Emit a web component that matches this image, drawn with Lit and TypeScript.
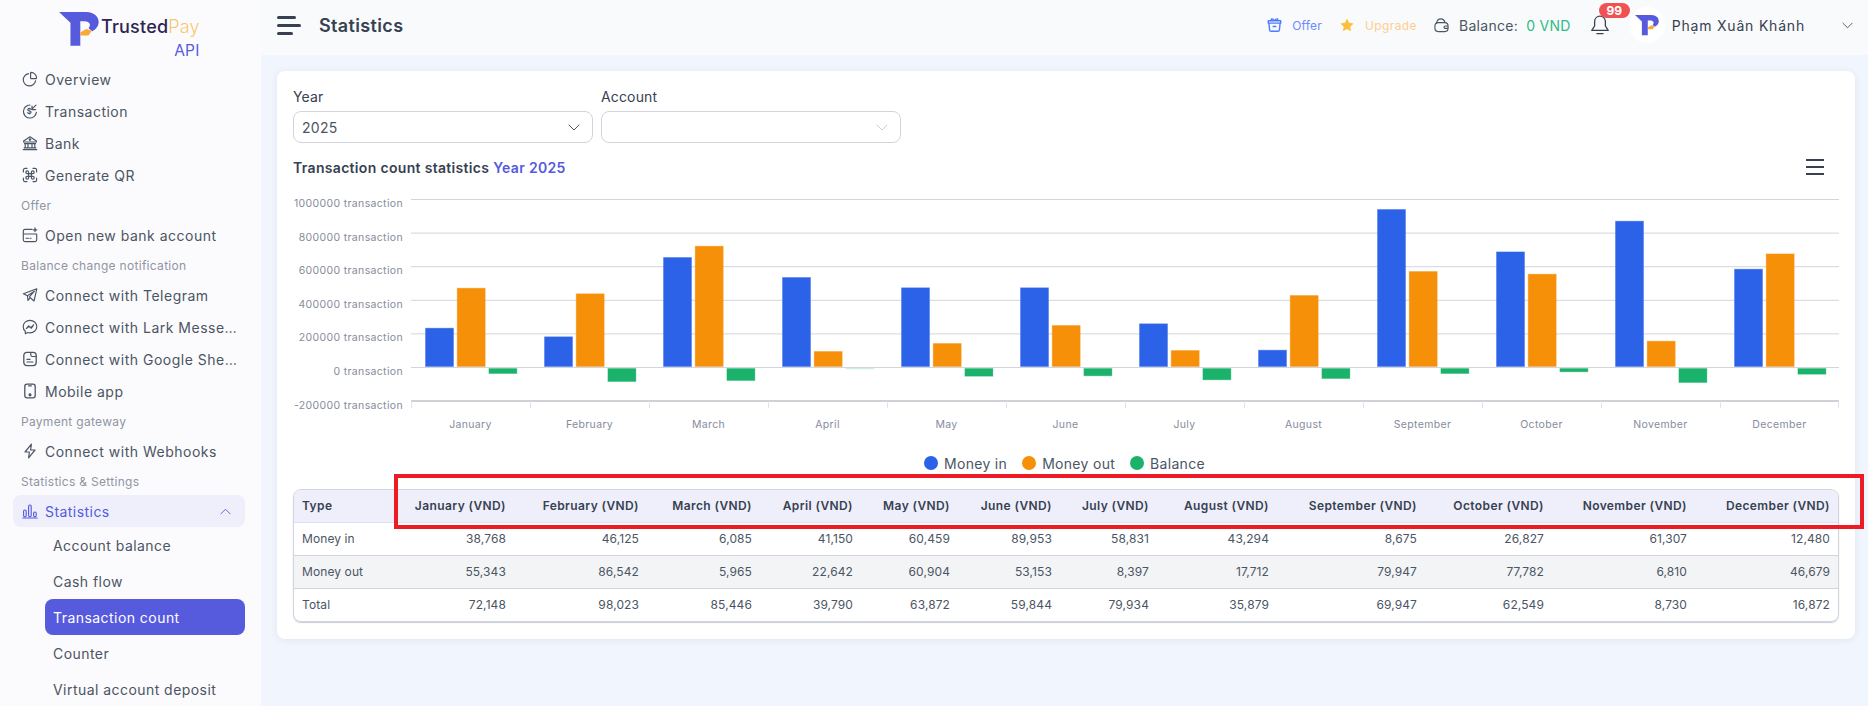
import { LitElement, html, css, svg } from "lit";
import { customElement } from "lit/decorators.js";

const s = (body: unknown, cls = "ic") => html`<svg class=${cls} viewBox="0 0 16 16" fill="none" stroke="currentColor" stroke-width="1.15" stroke-linecap="round" stroke-linejoin="round">${body}</svg>`;

const icons: Record<string, unknown> = {
  overview: s(svg`<path d="M6.6 2.6a6.2 6.2 0 1 0 7 7.1"/><path d="M9 1.4a5.6 5.6 0 0 1 5.6 5.6c0 .4-.2.6-.6.6H9.2c-.4 0-.6-.2-.6-.6V1.8c0-.2.2-.4.4-.4Z"/>`),
  tx: s(svg`<path d="M8 2a6.5 6.5 0 1 0 6.4 7.4"/><path d="M9.6 6.4 14 2.2M10 3v3.6h3.6"/><text x="4.7" y="10.7" font-size="7.5" font-weight="700" fill="currentColor" stroke="none" font-family="Inter">$</text>`),
  bank: s(svg`<path d="M1.6 6 8 1.8 14.4 6v1H1.6ZM2.4 8.6h11.2M3.2 9v3.4M6 9v3.4M10 9v3.4M12.8 9v3.4M2.2 12.8h11.6M1.2 14.6h13.6"/><circle cx="8" cy="4.6" r=".7" fill="currentColor"/>`),
  qr: s(svg`<path d="M1.4 5V3a1.6 1.6 0 0 1 1.6-1.6h2M11 1.4h2A1.6 1.6 0 0 1 14.6 3v2M14.6 11v2a1.6 1.6 0 0 1-1.6 1.6h-2M5 14.6H3A1.6 1.6 0 0 1 1.4 13v-2"/><path d="M6.6 6.6h2.8v2.8H6.6ZM6.6 6.6H5.2a1.4 1.4 0 1 1 1.4-1.4ZM9.4 6.6V5.2a1.4 1.4 0 1 1 1.4 1.4ZM9.4 9.4h1.4a1.4 1.4 0 1 1-1.4 1.4ZM6.6 9.4v1.4a1.4 1.4 0 1 1-1.4-1.4Z"/>`),
  card: s(svg`<path d="M10 2.400H3A1.700 1.700 0 0 0 1.300 4v9A1.700 1.700 0 0 0 3 14.600h10a1.700 1.700 0 0 0 1.700-1.600V7.400M1.300 7h13.400M4 11.200h2.400M8 11.200h1"/><path d="M13 1v3.600M11.200 2.800h3.600" stroke-width="1.300"/>`),
  tg: s(svg`<path d="M14.800 1.800 1.400 6.800l4 2 7-4.600-5 5.600 4.600 4.200ZM5.400 8.800l.6 4.600 2-2.200"/>`),
  lark: s(svg`<path d="M8 1.300c-3.900 0-6.800 2.800-6.800 6.400 0 1.900.8 3.500 2.100 4.600v2.400l2.300-1.200c.7.2 1.500.3 2.400.3 3.900 0 6.800-2.800 6.800-6.100S11.900 1.300 8 1.300Z"/><path d="m4.300 9.600 2.300-2.800 2.200 1.800 2.800-2.700-2.200 3.300-2.400-1.600Z"/>`),
  sheet: s(svg`<rect x="1.800" y="1.400" width="12.400" height="13.200" rx="3" stroke-width="1.300"/><path d="M8.800 1.600v2.400a1.500 1.500 0 0 0 1.500 1.500H14M5 8.400h3M5 11h6" stroke-width="1.200"/>`),
  phone: s(svg`<rect x="2.800" y="1.200" width="10.400" height="13.600" rx="2.200" stroke-width="1.300"/><path d="M6.600 2.800h2.800"/><circle cx="8" cy="11.800" r="1" fill="currentColor"/>`),
  bolt: s(svg`<path d="M9.400 1.200 3 9h4.400l-.8 5.800L13 7H8.600Z" stroke-width="1.200"/>`),
  stats: s(svg`<path d="M.8 15h14.400"/><rect x="1.600" y="7" width="2.600" height="6.800" rx="1.200"/><rect x="6.600" y="2" width="2.600" height="11.800" rx="1.200"/><rect x="11.600" y="9" width="2.600" height="4.800" rx="1.200"/>`),
};

const chevron = (cls: string) => html`<svg class=${cls} viewBox="0 0 12 7" fill="none" stroke="currentColor" stroke-width="1" stroke-linecap="round" stroke-linejoin="round"><path d="M1 1l5 5 5-5"/></svg>`;

const logoMark = svg`<path fill="#565add" d="M27 17H110C136 17 148 33 148 48C148 61 139 71 128 76L117 67C121 62 122 58 121 54C119 48 113 45 105 45H92V120H62V50Z"/><path fill="#f8a93a" d="M92 80L110 69L127 74L117 89H92Z"/>`;

type Row = { t: "item" | "label"; text: string; icon?: string };
const menu: Row[] = [
  { t: "item", text: "Overview", icon: "overview" },
  { t: "item", text: "Transaction", icon: "tx" },
  { t: "item", text: "Bank", icon: "bank" },
  { t: "item", text: "Generate QR", icon: "qr" },
  { t: "label", text: "Offer" },
  { t: "item", text: "Open new bank account", icon: "card" },
  { t: "label", text: "Balance change notification" },
  { t: "item", text: "Connect with Telegram", icon: "tg" },
  { t: "item", text: "Connect with Lark Messe…", icon: "lark" },
  { t: "item", text: "Connect with Google She…", icon: "sheet" },
  { t: "item", text: "Mobile app", icon: "phone" },
  { t: "label", text: "Payment gateway" },
  { t: "item", text: "Connect with Webhooks", icon: "bolt" },
  { t: "label", text: "Statistics & Settings" },
];
const subs = ["Account balance", "Cash flow", "Transaction count", "Counter", "Virtual account deposit"];

const months = ["January","February","March","April","May","June","July","August","September","October","November","December"];
// Bar heights in px above (blue, orange) and below (green) the zero line
const bars: [number, number, number][] = [
  [39.3,79.3,6],[30.7,73.7,14],[110,121.3,13],[90,16,1.5],[79.7,24,8.7],[79.7,42,8.3],
  [43.7,17,12.3],[17.3,72,11],[158,96,6],[115.6,93.3,4.3],[146.3,26.3,15],[98.3,113.6,6.7],
];
const yLabels = ["1000000","800000","600000","400000","200000","0","-200000"];
const rows: [string, string[]][] = [
  ["Money in", ["38,768","46,125","6,085","41,150","60,459","89,953","58,831","43,294","8,675","26,827","61,307","12,480"]],
  ["Money out", ["55,343","86,542","5,965","22,642","60,904","53,153","8,397","17,712","79,947","77,782","6,810","46,679"]],
  ["Total", ["72,148","98,023","85,446","39,790","63,872","59,844","79,934","35,879","69,947","62,549","8,730","16,872"]],
];

@customElement("app-root")
export class AppRoot extends LitElement {
  static styles = css`
    :host { display: grid; grid-template-columns: 261px 1fr; height: 100vh; width: 100%; overflow: hidden; position: relative;
      font-family: Inter, "Noto Sans", sans-serif; color: #475569; background: #f1f5fd; }
    * { box-sizing: border-box; }
    .side { background: #fbfbfd; height: 100vh; overflow: hidden; }
    .logo { height: 63px; display: flex; padding: 11px 0 0 59px; position: relative; }
    .logo .mark { width: 40px; height: 36px; flex: none; overflow: visible; }
    .brand { margin: 5px 0 0 2px; display: flex; flex-direction: column; align-items: flex-end; }
    .bname { font-size: 18px; line-height: 22px; font-weight: 500; color: #2e2554; letter-spacing: .2px; }
    .bname span { color: #f9c66f; font-weight: 300; }
    .api { font-size: 15.5px; line-height: 18px; color: #565add; margin-top: 4px; letter-spacing: .3px; }
    .item { height: 32px; display: flex; align-items: center; gap: 7px; padding-left: 22px; font-size: 14px; letter-spacing: .5px; white-space: nowrap; color: #4b5563; }
    .ic { width: 16px; height: 16px; flex: none; color: #4b5563; }
    .label { height: 28px; display: flex; align-items: center; padding-left: 21px; font-size: 12px; letter-spacing: .3px; color: #8f95a3; white-space: nowrap; }
    .open { height: 32px; margin: 0 16px 0 13px; padding: 0 14px 0 9px; background: #eeeffb; border-radius: 8px; display: flex; align-items: center; gap: 7px; color: #565add; font-size: 14px; letter-spacing: .45px; }
    .open .ic { color: #565add; }
    .open .up { margin-left: auto; width: 11px; height: 7px; transform: rotate(180deg); color: #565add; }
    .sub { height: 36px; margin: 0 16px 0 45px; padding-left: 8px; display: flex; align-items: center; font-size: 14px; letter-spacing: .45px; border-radius: 8px; color: #4b5563; white-space: nowrap; }
    .sub.on { background: #565add; color: #fff; }

    .main { min-width: 0; display: flex; flex-direction: column; }
    header { height: 55px; flex: none; background: #f9fafc; display: flex; align-items: center; justify-content: space-between; padding: 0 15px 5px 16px; }
    .hl { display: flex; align-items: center; gap: 18px; }
    .burger { display: flex; flex-direction: column; gap: 5px; width: 24px; }
    .burger i { height: 3px; background: #374151; border-radius: 2px; display: block; }
    .burger i:nth-child(1) { width: 19px; } .burger i:nth-child(2) { width: 24px; } .burger i:nth-child(3) { width: 16px; }
    h1 { margin: 0; font-size: 18px; font-weight: 600; color: #374151; letter-spacing: .35px; }
    .hr { display: flex; align-items: center; font-size: 14px; white-space: nowrap; }
    .hr svg { flex: none; }
    .offer { color: #6c8bff; font-size: 12px; margin: 0 18px 0 10px; letter-spacing: .2px; }
    .upg { color: #fdcf8e; font-size: 12px; margin: 0 17px 0 11px; letter-spacing: .4px; }
    .bal { color: #4b5563; margin: 0 8px 0 10px; letter-spacing: .3px; }
    .vnd { color: #2ebd85; margin-right: 20px; letter-spacing: .3px; }
    .bell { position: relative; width: 18px; height: 20px; margin-right: 20px; color: #374151; }
    .bell svg { width: 18px; height: 20px; display: block; }
    .badge { position: absolute; left: 8px; top: -12px; width: 31px; height: 15px; border-radius: 8px; background: #f05252; color: #fff; font-size: 12px; font-weight: 700; line-height: 15px; text-align: center; }
    .avatar { width: 36px; height: 36px; border-radius: 50%; background: #fff; margin-right: 7px; display: flex; align-items: center; justify-content: center; }
    .name { color: #374151; margin-right: 37px; letter-spacing: .8px; }
    .down { width: 11px; height: 7px; color: #4b5563; }

    .content { padding: 16px 13px 0 16px; }
    .card { background: #fff; border-radius: 8px; padding: 16px; height: 568px; box-shadow: 0 1px 6px rgba(100,116,139,.12); }
    .filters { display: flex; gap: 8px; }
    .field { width: 300px; }
    .field label { display: block; font-size: 14px; line-height: 20px; height: 24px; color: #374151; letter-spacing: .15px; }
    .select { height: 32px; border: 1px solid #d1d5db; border-radius: 8px; display: flex; align-items: center; justify-content: space-between; padding: 0 12px 0 8px; font-size: 14px; color: #4b5563; letter-spacing: .3px; }
    .select svg { width: 12px; height: 7px; color: #4b5563; }
    .select.empty svg { color: #c9ced6; }
    .title { display: flex; align-items: center; justify-content: space-between; height: 24px; margin-top: 12px; padding-right: 15px; font-size: 14px; font-weight: 600; color: #374151; letter-spacing: .32px; }
    .title b { font-weight: 600; color: #565add; }
    .menu { display: flex; flex-direction: column; gap: 5px; width: 18px; }
    .menu i { height: 2px; background: #374151; display: block; }
    .chart { display: block; width: 1546px; height: 268px; margin-top: 11px; font-family: Inter, sans-serif; }
    .chart text { fill: #868c9b; font-size: 10.5px; letter-spacing: .35px; }
    .legend { display: flex; justify-content: center; align-items: center; height: 20px; margin-top: -5px; padding-right: 3px; font-size: 14px; color: #4b5563; letter-spacing: .3px; }
    .legend i { width: 14px; height: 14px; border-radius: 50%; margin-right: 6px; }
    .legend span { margin-right: 15px; }
    .legend span:last-child { margin-right: 0; }
    .tw { margin: 16px 0 0; border: 1px solid #d1d5db; border-radius: 8px; overflow: hidden; box-shadow: 0 1px 1px #c7ccd6; width: 1546px; }
    table { border-collapse: collapse; table-layout: fixed; width: 100%; font-size: 12px; color: #4b5563; letter-spacing: .1px; }
    th, td { height: 33px; padding: 0 8px; text-align: right; white-space: nowrap; }
    th { background: #eeeffb; color: #374151; font-weight: 600; height: 32px; border-bottom: 1px solid #dcdff5; letter-spacing: .4px; }
    td { border-bottom: 1px solid #d1d5db; }
    tr:last-child td { border-bottom: 0; }
    tbody tr:nth-child(2) td { background: #f3f4f6; }
    th:first-child, td:first-child { text-align: left; width: 100px; }
    .c1 { width: 120px; } .c2 { width: 133px; } .c3 { width: 113px; } .c4 { width: 101px; } .c5 { width: 97px; } .c6 { width: 102px; }
    .c7 { width: 97px; } .c8 { width: 120px; } .c9 { width: 148px; } .c10 { width: 127px; } .c11 { width: 143px; } .c12 { width: 143px; }
    .mark-box { position: absolute; left: 394px; top: 474px; width: 1470px; height: 55px; border: 4px solid #ed1c24; pointer-events: none; }
  `;

  private chart() {
    const x0 = 118, base = 177, w = 119, unit = 33.6;
    // svg origin = page (293, 190)
    const rect = (x: number, y: number, h: number, c: string, o = 1) =>
      svg`<rect x=${x + .5} y=${y + .5} width="28" height=${Math.max(h - 1, .5)} fill=${c} stroke=${c} stroke-opacity=".35" opacity=${o}/>`;
    return html`<svg class="chart" viewBox="0 0 1546 268">
      ${yLabels.map((l, i) => svg`
        ${i < 6 ? svg`<line x1=${x0} x2="1546" y1=${9.5 + i * unit} y2=${9.5 + i * unit} stroke="#d3d5de"/>` : ""}
        <text x="110" y=${17 + i * unit} text-anchor="end">${l} transaction</text>`)}
      <line x1=${x0} x2="1546" y1="211" y2="211" stroke="#bfc2c9" stroke-width="1.500"/>
      ${months.map((_, i) => svg`<line x1=${x0 + .5 + i * w} x2=${x0 + .5 + i * w} y1="211" y2="218" stroke="#e2e4ea"/>`)}
      <line x1="1545.500" x2="1545.500" y1="211" y2="218" stroke="#e2e4ea"/>
      ${months.map((m, i) => svg`<text x=${x0 + w * i + w / 2} y="238" text-anchor="middle">${m}</text>`)}
      ${bars.map(([a, b, c], i) => {
        const gx = x0 + 14 + i * w;
        return svg`
          ${rect(gx, base - a, a, "#2b62e8")}
          ${rect(gx + 31.7, base - b, b, "#f79009")}
          ${rect(gx + 63.4, base + 1, c, "#1bb26b", c < 2 ? .3 : 1)}`;
      })}
    </svg>`;
  }

  render() {
    return html`
      <aside class="side">
        <div class="logo">
          <svg class="mark" viewBox="27 17 122 104">${logoMark}</svg>
          <div class="brand"><div class="bname">Trusted<span>Pay</span></div><div class="api">API</div></div>
        </div>
        ${menu.map((r) => r.t === "label"
          ? html`<div class="label">${r.text}</div>`
          : html`<div class="item">${icons[r.icon!]}<span>${r.text}</span></div>`)}
        <div class="open">${icons.stats}<span>Statistics</span>${chevron("up")}</div>
        ${subs.map((t) => html`<div class="sub ${t === "Transaction count" ? "on" : ""}">${t}</div>`)}
      </aside>
      <div class="main">
        <header>
          <div class="hl"><div class="burger"><i></i><i></i><i></i></div><h1>Statistics</h1></div>
          <div class="hr">
            <svg width="15" height="15" viewBox="0 0 16 16" fill="none" stroke="#4f7bff" stroke-width="1.500" stroke-linejoin="round"><path d="M2 5.500h12l-.8 7.300a1.500 1.500 0 0 1-1.500 1.400H4.300a1.500 1.500 0 0 1-1.500-1.400ZM1.400 3h13.200v2.500H1.400ZM5 3c-1.500-2.400 1-3 3 0 2-3 4.500-2.400 3 0M6 9h4"/></svg>
            <span class="offer">Offer</span>
            <svg width="14" height="14" viewBox="0 0 16 16" fill="#fbbf3c"><path d="M8 .6l2.300 4.900 5.300.7-3.900 3.700 1 5.300L8 12.600l-4.700 2.600 1-5.300L.4 6.200l5.300-.7Z"/></svg>
            <span class="upg">Upgrade</span>
            <svg width="15" height="16" viewBox="0 0 16 16" fill="none" stroke="#4b5563" stroke-width="1.200" stroke-linejoin="round"><path d="M2.600 6.500C3 3.500 5 1.500 7.500 1.500c2 0 3.500 1.300 4.200 3.500"/><rect x="1" y="5.500" width="14" height="9.500" rx="3.500"/><path d="M15 9h-3a1.300 1.300 0 0 0 0 2.600h3"/></svg>
            <span class="bal">Balance:</span><span class="vnd">0 VND</span>
            <div class="bell">
              <svg viewBox="0 0 18 20" fill="none" stroke="currentColor" stroke-width="1.300" stroke-linecap="round" stroke-linejoin="round"><path d="M9 1.200c-3.300 0-5.400 2.500-5.400 5.600v4.200L.8 15.400h16.400L14.400 11V6.800c0-3.100-2.100-5.600-5.400-5.600ZM6 18.700h6"/></svg>
              <span class="badge">99</span>
            </div>
            <div class="avatar"><svg width="24" height="25" viewBox="27 10 122 120">${logoMark}</svg></div>
            <span class="name">Phạm Xuân Khánh</span>
            ${chevron("down")}
          </div>
        </header>
        <div class="content">
          <section class="card">
            <div class="filters">
              <div class="field"><label>Year</label><div class="select"><span>2025</span>${chevron("")}</div></div>
              <div class="field"><label>Account</label><div class="select empty"><span></span>${chevron("")}</div></div>
            </div>
            <div class="title"><span>Transaction count statistics <b>Year 2025</b></span><div class="menu"><i></i><i></i><i></i></div></div>
            ${this.chart()}
            <div class="legend"><i style="background:#2b62e8"></i><span>Money in</span><i style="background:#f79009"></i><span>Money out</span><i style="background:#1bb26b"></i><span>Balance</span></div>
            <div class="tw"><table>
              <thead><tr><th>Type</th>${months.map((m, i) => html`<th class="c${i + 1}">${m} (VND)</th>`)}</tr></thead>
              <tbody>${rows.map(([n, v]) => html`<tr><td>${n}</td>${v.map((x) => html`<td>${x}</td>`)}</tr>`)}</tbody>
            </table></div>
          </section>
        </div>
      </div>
      <div class="mark-box"></div>
    `;
  }
}
